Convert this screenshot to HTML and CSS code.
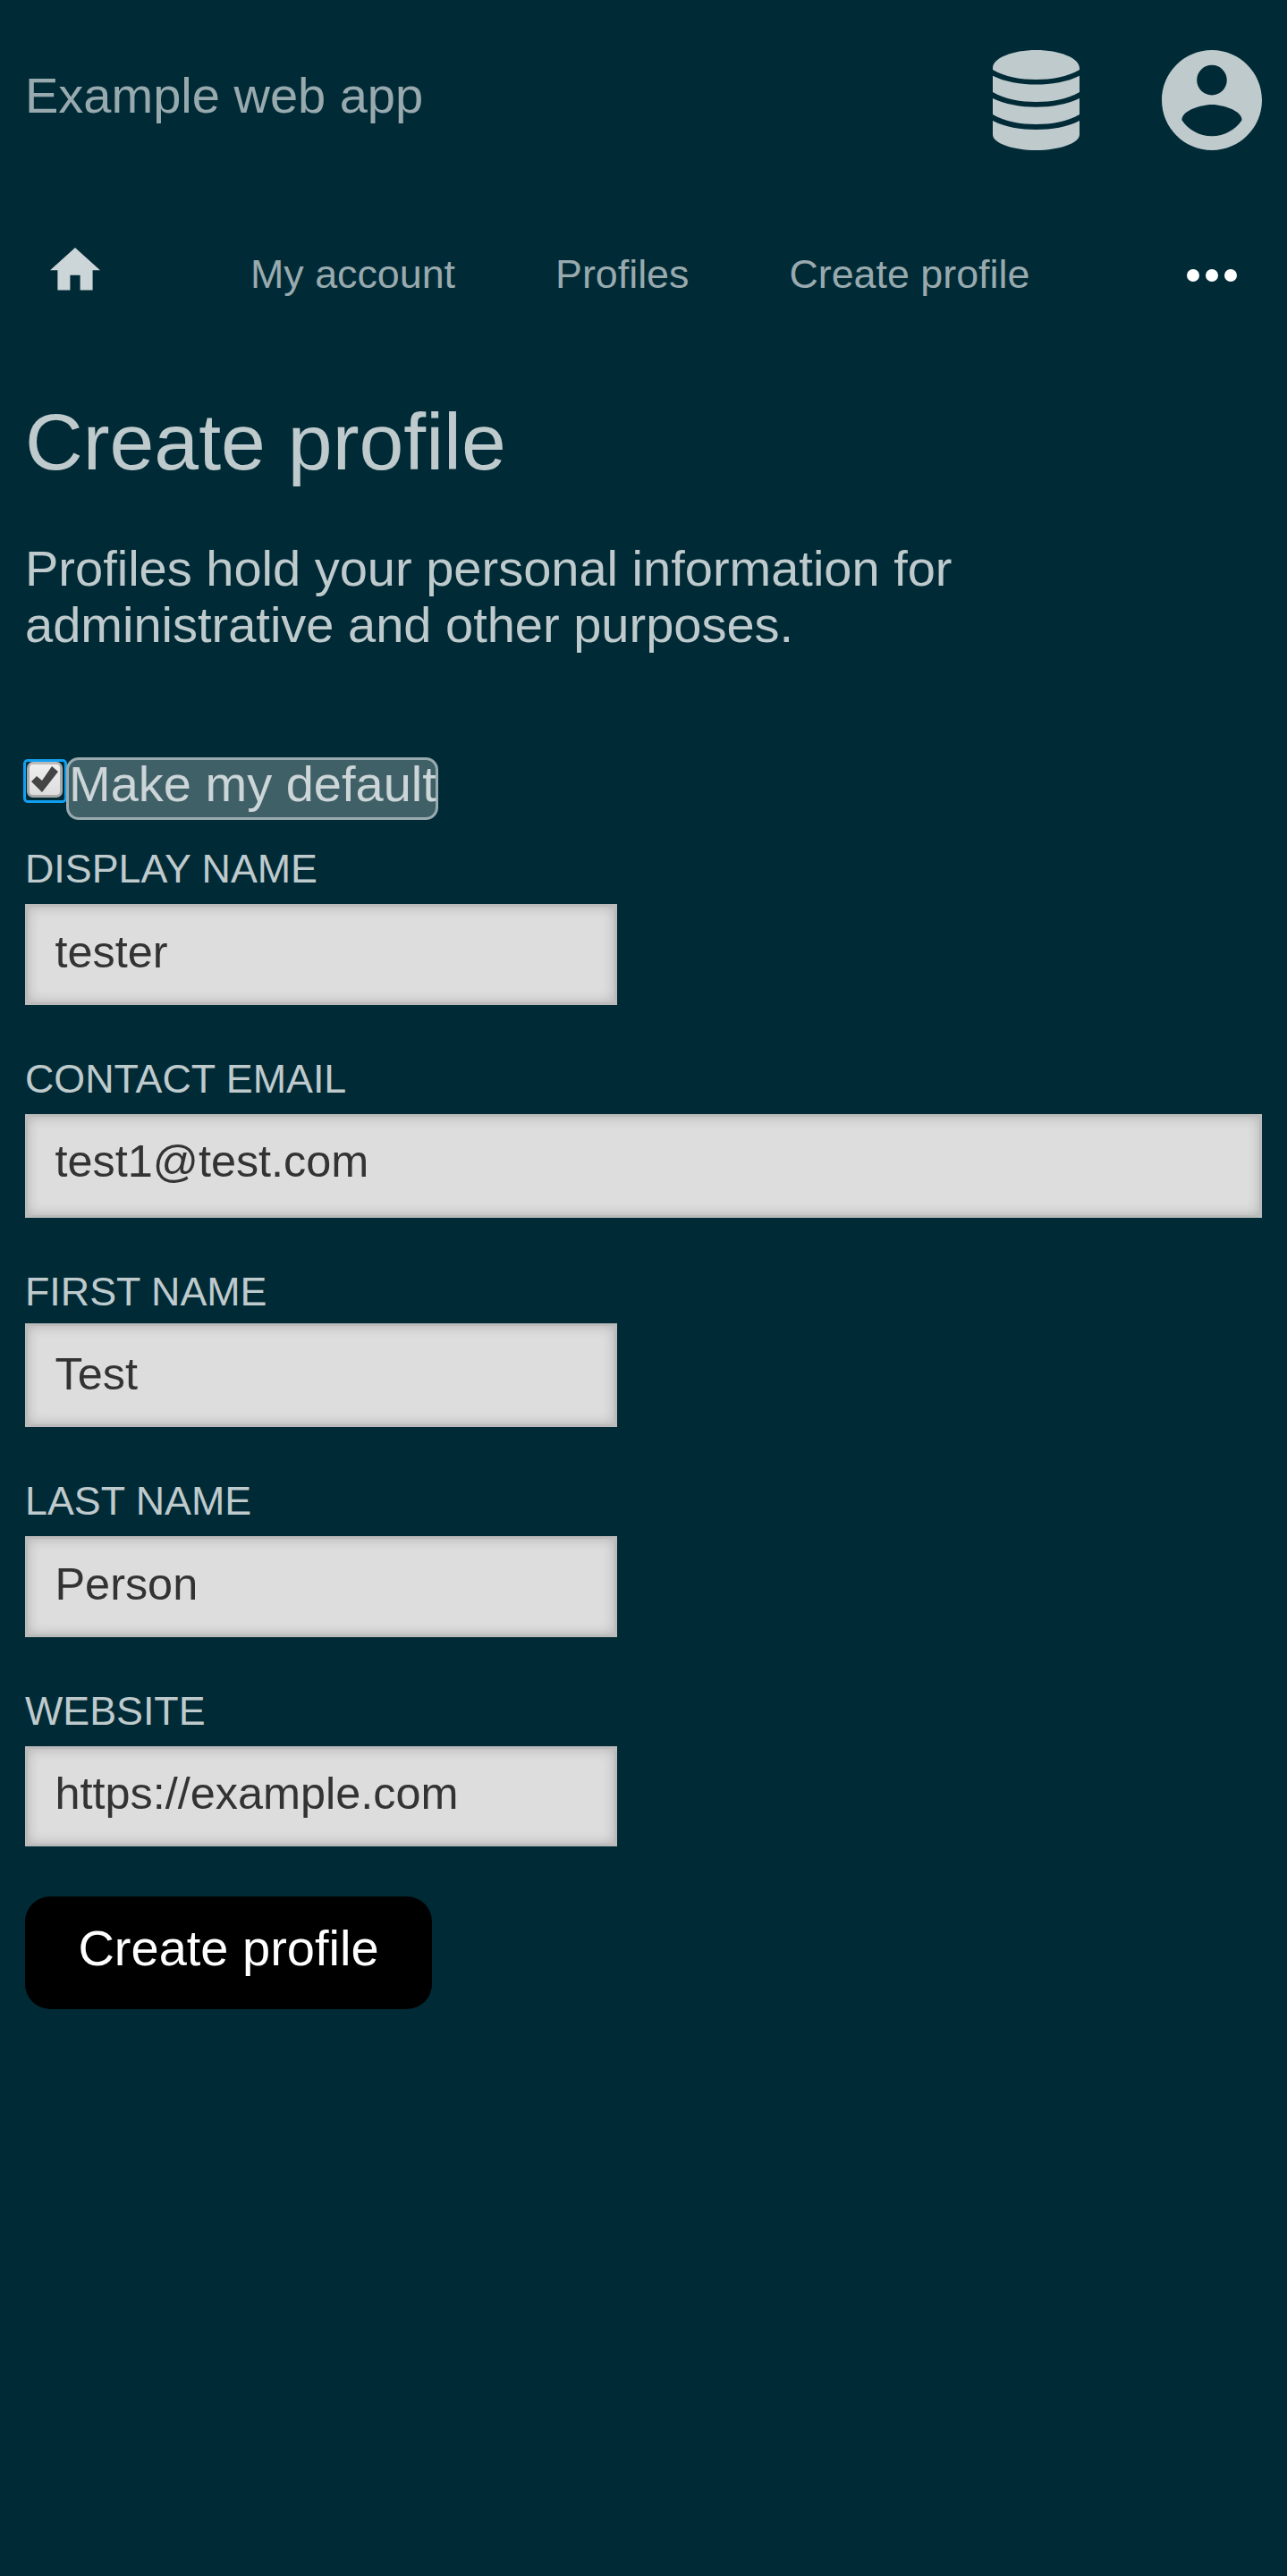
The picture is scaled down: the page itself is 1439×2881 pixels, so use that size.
FILE: index.html
```html
<!DOCTYPE html>
<html lang="en">
<head>
<meta charset="utf-8">
<title>Create profile</title>
<link rel="stylesheet" href="styles.css">
</head>
<body>
<header class="header">
  <a class="brand">Example web app</a>
  <div class="tools">
    <svg class="icon-db" viewBox="0 0 97 112"><path d="M0 20C0 9 22 0 48.500 0S97 9 97 20V22C84 30 65 33 48.500 33S13 30 0 22zM0 28.700C13 35.500 32 38.500 48.500 38.500S84 35.500 97 28.700V47C84 55 65 58 48.500 58S13 55 0 47zM0 54C13 60.700 32 63.700 48.500 63.700S84 60.700 97 54V72C84 80 65 83 48.500 83S13 80 0 72zM0 79C13 86 32 89 48.500 89S84 86 97 79V94.500C97 104 75 112 48.500 112S0 104 0 94.500z"/></svg>
    <svg class="icon-user" viewBox="2 2 20 20"><path d="M12 2C6.480 2 2 6.480 2 12s4.480 10 10 10 10-4.480 10-10S17.520 2 12 2zm0 3c1.660 0 3 1.340 3 3s-1.340 3-3 3-3-1.340-3-3 1.340-3 3-3zm0 14.200c-2.500 0-4.710-1.280-6-3.220.03-1.990 4-3.080 6-3.080 1.990 0 5.970 1.090 6 3.080-1.290 1.940-3.500 3.220-6 3.220z"/></svg>
  </div>
</header>
<nav class="nav">
  <svg class="icon-home" viewBox="2 3 20 17"><path d="M10 20v-6h4v6h5v-8h3L12 3 2 12h3v8z"/></svg>
  <a>My account</a>
  <a>Profiles</a>
  <a>Create profile</a>
  <svg class="icon-more" viewBox="0 0 56 14"><circle cx="7" cy="7" r="7"/><circle cx="28" cy="7" r="7"/><circle cx="49" cy="7" r="7"/></svg>
</nav>
<main class="main">
  <h1>Create profile</h1>
  <p class="intro">Profiles hold your personal information for administrative and other purposes.</p>
  <form>
    <div class="default-row">
      <span class="check" role="checkbox" aria-checked="true" aria-label="Make my default">
        <span class="check-box"><svg viewBox="0 0 30 29"><path d="M0 17l6-6 6 5L23 0l7 6-18 23z"/></svg></span>
      </span>
      <label class="default-label">Make my default</label>
    </div>
    <div class="field">
      <label for="display">DISPLAY NAME</label>
      <input id="display" value="tester">
    </div>
    <div class="field field-email">
      <label for="email">CONTACT EMAIL</label>
      <input id="email" value="test1@test.com">
    </div>
    <div class="field field-first">
      <label for="first">FIRST NAME</label>
      <input id="first" value="Test">
    </div>
    <div class="field">
      <label for="last">LAST NAME</label>
      <input id="last" value="Person">
    </div>
    <div class="field field-site">
      <label for="site">WEBSITE</label>
      <input id="site" value="https://example.com">
    </div>
    <button class="submit" type="button">Create profile</button>
  </form>
</main>
</body>
</html>
```
FILE: styles.css
```css
* { box-sizing: border-box; }
body {
  margin: 0;
  min-height: 2881px;
  background: #002b36;
  color: #bfcacd;
  font: 56px/63px "Liberation Sans", Arial, sans-serif;
}
svg { display: block; fill: currentColor; }
.header {
  display: flex;
  justify-content: space-between;
  height: 277px;
  padding: 56px 28px 0;
}
.brand { margin-top: 19px; color: #99aaaf; }
.tools { display: flex; gap: 92px; height: 112px; }
.icon-db { width: 97px; height: 112px; }
.icon-user { width: 112px; height: 112px; }
.nav {
  display: flex;
  align-items: flex-start;
  gap: 112px;
  height: 167px;
  padding: 0 56px;
  color: #99aaaf;
  font-size: 44.8px;
  line-height: 50px;
}
.nav a { margin-top: 4px; white-space: nowrap; }
.icon-home { width: 56px; height: 47.6px; margin-right: 56px; color: #ccd5d7; }
.icon-more { width: 56px; height: 14px; margin: 24px 0 0 auto; color: #fff; }
.main { padding: 0 28px; }
h1 { margin: 0 0 60px; font-size: 89.6px; font-weight: 400; line-height: 100px; }
.intro { width: 1120px; margin: 0 0 117px; }
.default-row { display: flex; align-items: flex-start; margin: 0 0 28px -2px; }
.check {
  width: 49px;
  height: 49px;
  margin-top: 2px;
  padding: 0 1px;
  border: 3px solid #129ff0;
  border-radius: 5px;
}
.check-box {
  display: block;
  width: 40px;
  height: 40px;
  padding: 2px;
  border: 3px solid #a9a9a9;
  border-top-color: #bbb;
  border-radius: 7px;
  background: linear-gradient(#eee, #ddd);
}
.check-box svg { width: 30px; height: 29px; color: #444; }
.default-label {
  width: 416px;
  height: 70px;
  margin-left: -1px;
  border: 3px solid #99aaaf;
  border-radius: 14px;
  background: #406067;
  color: #ccd5d7;
  line-height: 53px;
  white-space: nowrap;
}
.field { height: 235px; }
.field label {
  display: block;
  height: 66px;
  padding-top: 1px;
  font-size: 44.8px;
  line-height: 50px;
}
.field input {
  display: block;
  width: 662px;
  height: 113px;
  margin: 0;
  padding: 22px 30.5px 28px;
  border: 3px solid #bbb;
  border-radius: 0;
  outline: 0;
  background: #ddd;
  box-shadow: inset 0 0 14px rgba(0, 0, 0, .2);
  color: #333;
  font: 50.4px/57px "Liberation Sans", Arial, sans-serif;
}
.field-email { height: 238px; }
.field-email input { width: 100%; height: 116px; padding-bottom: 32px; padding-top: 21px; }
.field-first { height: 234px; }
.field-first label { height: 62px; }
.field-first input { height: 116px; padding-top: 25px; padding-bottom: 28px; }
.field-site { height: 234px; }
.field-site input { height: 112px; padding-top: 21px; }
.submit {
  display: block;
  width: 455px;
  height: 126px;
  margin: 0;
  padding: 0 0 11px;
  border: 0;
  border-radius: 28px;
  background: #000;
  color: #fff;
  font: 56px/63px "Liberation Sans", Arial, sans-serif;
}
```
